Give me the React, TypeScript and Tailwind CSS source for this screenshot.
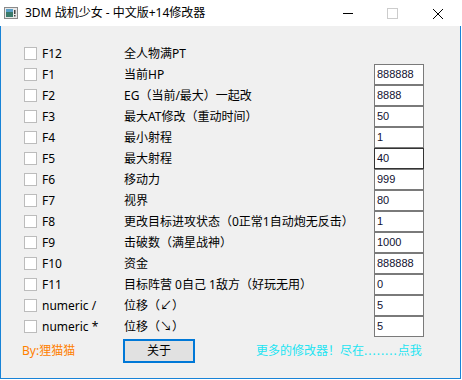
import React from "react";

type Row = { key: string; desc: string; val: string | null; focus?: boolean };

const rows: Row[] = [
  { key: "F12", desc: "全人物满PT", val: null },
  { key: "F1", desc: "当前HP", val: "888888" },
  { key: "F2", desc: "EG（当前/最大）一起改", val: "8888" },
  { key: "F3", desc: "最大AT修改（重动时间）", val: "50" },
  { key: "F4", desc: "最小射程", val: "1" },
  { key: "F5", desc: "最大射程", val: "40", focus: true },
  { key: "F6", desc: "移动力", val: "999" },
  { key: "F7", desc: "视界", val: "80" },
  { key: "F8", desc: "更改目标进攻状态（0正常1自动炮无反击）", val: "1" },
  { key: "F9", desc: "击破数（满星战神）", val: "1000" },
  { key: "F10", desc: "资金", val: "888888" },
  { key: "F11", desc: "目标阵营 0自己 1敌方（好玩无用）", val: "0" },
  { key: "numeric /", desc: "位移（↙）", val: "5" },
  { key: "numeric *", desc: "位移（↘）", val: "5" },
];

const ui = { fontFamily: '"Noto Sans", "Noto Sans CJK SC", sans-serif' };

export default function App() {
  return (
    <div className="w-[462px] h-[380px] flex flex-col bg-white overflow-hidden" style={ui}>
      {/* Title bar */}
      <div className="h-[26px] flex items-center bg-white relative">
        <svg width="14" height="12" viewBox="0 0 14 12" className="ml-[4px] mt-[0px]">
          <rect x="0.5" y="0.5" width="13" height="11" fill="#e8e8e8" stroke="#8a8a8a" />
          <rect x="2" y="2" width="7" height="8" fill="#3a7a6a" />
          <rect x="2" y="2" width="7" height="3" fill="#5aa0c8" />
          <rect x="10" y="3" width="1.5" height="4" fill="#444" />
          <rect x="10" y="8" width="1.5" height="1.5" fill="#444" />
        </svg>
        <span className="ml-[7px] text-[12px] leading-none text-black whitespace-nowrap">
          3DM 战机少女 - 中文版+14修改器
        </span>
        <div className="absolute left-[343px] top-[13px] w-[10px] h-px bg-black" />
        <div className="absolute left-[387px] top-[8px] w-[11px] h-[11px] border border-[#cccccc]" />
        <svg className="absolute left-[432px] top-[8px]" width="12" height="12" viewBox="0 0 12 12">
          <path d="M1 1 L11 11 M11 1 L1 11" stroke="#000" strokeWidth="1" />
        </svg>
      </div>

      {/* Client */}
      <div className="flex-1 flex mr-px mb-px border-l border-r border-b border-[#1883d7] bg-[#f0f0f0]">
        <div className="flex-1 flex flex-col pt-[17px]">
          {rows.map((r) => (
            <div key={r.key} className="h-[21px] flex items-center">
              <div className="ml-[23px] w-[13px] h-[13px] border border-[#bcbcbc] bg-white shrink-0" />
              <div className="ml-[5px] w-[82px] text-[12px] leading-none text-black whitespace-nowrap shrink-0">
                {r.key}
              </div>
              <div className="w-[250px] text-[12px] leading-none text-black whitespace-nowrap shrink-0">
                {r.desc}
              </div>
              {r.val !== null && (
                <div
                  className={
                    "w-[50px] h-[21px] bg-white flex items-center pl-[2px] text-[11px] leading-none text-[#101030] shrink-0 border " +
                    (r.focus ? "border-[#333333]" : "border-[#7a7a7a]")
                  }
                  style={{ fontFamily: '"Liberation Sans", Arial, sans-serif' }}
                >
                  {r.val}
                </div>
              )}
            </div>
          ))}
          <div className="mt-[2px] h-[24px] flex items-center">
            <span className="ml-[21px] w-[101px] text-[12px] leading-none text-[#ff8000] whitespace-nowrap">
              By:狸猫猫
            </span>
            <div className="w-[72px] h-[24px] border-2 border-[#0078d7] bg-[#e1e1e1] flex items-center justify-center text-[12px] leading-none text-black">
              关于
            </div>
            <span className="ml-[61px] text-[12px] leading-none text-[#22e4f2] whitespace-nowrap">
              更多的修改器！尽在<span className="tracking-[1px]">........</span>点我
            </span>
          </div>
        </div>
      </div>
    </div>
  );
}
